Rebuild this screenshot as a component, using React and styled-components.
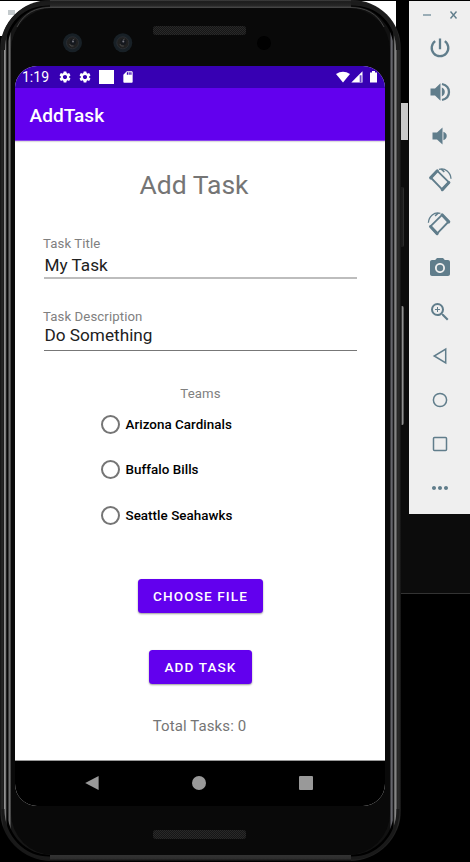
import React from "react";
import styled, { createGlobalStyle, css } from "styled-components";
import { MdPhotoCamera, MdZoomIn, MdMoreHoriz, MdSettings, MdSdCard } from "react-icons/md";

const GlobalStyle = createGlobalStyle`
  * { box-sizing: border-box; }
  html, body { margin: 0; background: #000; }
  body { font-family: Roboto, sans-serif; overflow: hidden; }
  svg { display: block; flex: none; }
`;

const Desktop = styled.main`
  position: relative;
  display: flex;
  align-items: flex-start;
  justify-content: space-between;
  width: 470px;
  height: 862px;
  overflow: hidden;
  background: #000;
`;

const Window = styled.div`
  position: absolute;
  left: ${(p) => p.$x}px;
  top: ${(p) => p.$y}px;
  width: ${(p) => p.$w}px;
  height: ${(p) => p.$h}px;
  background: ${(p) => p.$color};
  border-bottom: ${(p) => (p.$edge ? `1px solid ${p.$edge}` : "0")};
`;

const SideKey = styled.div`
  position: absolute;
  left: 400px;
  top: ${(p) => p.$y}px;
  width: 4px;
  height: ${(p) => p.$h}px;
  border-radius: 0 2px 2px 0;
  background: ${(p) => p.$bright
    ? "linear-gradient(90deg, #151515 15%, #303030 35%, #999 65%, #333)"
    : "linear-gradient(90deg, #292929, #151515 50%, #333)"};
`;

const Phone = styled.div`
  position: relative;
  width: 401px;
  height: 861px;
  padding: 3px 4px 2px;
  border-radius: 50px 49px 51px 51px;
  background: linear-gradient(90deg, #111 0, #292929 2px, #181818 4px, #202020 396px, #2c2c2c 399px, #111 401px);
`;

const Rim = styled.div`
  height: 100%;
  padding: 3px 3px 4px;
  border-radius: 47px;
  background: linear-gradient(90deg, #777 0, #aaa 1px, #444 2px, #000 3px, #000 389px, #333 390px, #999 391px, #444 393px);
`;

const InnerRim = styled.div`
  height: 100%;
  padding: 2px 4px 0;
  border-radius: 44px;
  background: linear-gradient(90deg, #000 0, #111 1px, #666 2px, #777 3px, #161616 4px, #111 383px, #63636b 384px, #66666c 385px, #000 387px);
`;

const Face = styled.div`
  height: 100%;
  display: flex;
  flex-direction: column;
  padding: 58px 4px 0;
  border-radius: 42px;
  background: #090909;
`;

const Metal = styled.svg`
  position: absolute;
  inset: 0;
  pointer-events: none;
`;

const Screen = styled.div`
  width: 370px;
  height: 740px;
  display: flex;
  flex-direction: column;
  border-radius: 22px;
  overflow: hidden;
  background: #fff;
`;

const StatusBar = styled.header`
  flex: none;
  height: 22px;
  display: flex;
  align-items: center;
  padding: 0 7px 0 7px;
  color: #fff;
  background: #3700b3;
`;

const Clock = styled.time`
  width: 35.6px;
  font-size: 14px;
  line-height: 23px;
`;

const Notices = styled.div`
  display: flex;
  align-items: center;
  gap: 6.8px;
  flex: 1;
`;

const Notice = styled.span`
  width: 15px;
  height: 14px;
  background: #fff;
`;

const Signals = styled.svg`
  width: 42px;
  height: 14px;
`;

const AppBar = styled.div`
  flex: none;
  height: 53px;
  padding: 1px 14.5px 0;
  color: #fff;
  background: #6200ee;
  border-bottom: 1px solid #8b43f1;
  box-shadow: 0 1px 1px #ddd;
  font-size: 19.1px;
  font-weight: 500;
  line-height: 54px;
`;

const Form = styled.form`
  flex: 1;
  display: flex;
  flex-direction: column;
  align-items: center;
  padding-top: 28px;
  border-bottom: 1px solid #999;
`;

const Title = styled.h1`
  margin: 0 0 32px;
  padding-right: 12px;
  color: #757575;
  font-size: 26.5px;
  font-weight: 400;
  line-height: 32px;
`;

const Field = styled.label`
  width: 313px;
  height: ${(p) => p.$height}px;
  margin-bottom: ${(p) => p.$after}px;
  display: flex;
  flex-direction: column;
  border-bottom: ${(p) => p.$weight}px solid ${(p) => p.$line};
`;

const Caption = styled.span`
  color: #808080;
  font-size: 13.2px;
  letter-spacing: .1px;
  line-height: 21px;
  margin-left: ${(p) => (p.$center ? 1 : -0.5)}px;
`;

const Value = styled.span`
  padding-left: 1px;
  color: #212121;
  font-size: 17.2px;
  line-height: ${(p) => p.$leading}px;
`;

const Teams = styled.div`
  width: 198px;
  display: flex;
  flex-direction: column;
  margin: 10.3px 0 28px;
`;

const Team = styled.label`
  display: flex;
  align-items: center;
  gap: 5.5px;
  height: 20px;
  margin-bottom: 25.5px;
  color: #000;
  font-size: 13.4px;
  font-weight: 500;
  letter-spacing: .04px;
`;

const Radio = styled.span`
  width: 19px;
  height: 19px;
  border: 2px solid #757575;
  border-radius: 50%;
`;

const Button = styled.button`
  width: ${(p) => p.$width}px;
  height: 34px;
  margin: 0 0 ${(p) => p.$after}px;
  padding: 1px 0 0 1px;
  border: 0;
  border-radius: 3.5px;
  color: #fff;
  background: #6200ee;
  box-shadow: 0 1px 2px #0006;
  font: 500 13.6px Roboto, sans-serif;
  letter-spacing: 1.1px;
  white-space: nowrap;
`;

const Total = styled.p`
  margin: 0 0 0 -1px;
  color: #757575;
  font-size: 15px;
  letter-spacing: .1px;
  line-height: 18px;
`;

const NavBar = styled.nav`
  flex: none;
  height: 45px;
  display: grid;
  grid-template-columns: repeat(3, 107px);
  padding: 0 0 2px 23.5px;
  align-items: center;
  justify-items: center;
  background: #000;
`;

const Toolbar = styled.aside`
  position: relative;
  width: 61px;
  height: 513px;
  margin-top: 1px;
  display: flex;
  flex-direction: column;
  align-items: center;
  color: #607d8b;
  background: #efefef;
`;

const WindowKeys = styled.div`
  width: 100%;
  height: 25px;
  display: flex;
  gap: 18px;
  padding: 9px 0 0 14px;
`;

const Tool = styled.button`
  width: 44px;
  height: 44px;
  display: grid;
  place-items: center;
  margin: 0;
  padding: 0 0 0 1px;
  border: 0;
  color: inherit;
  background: none;
`;

const lineArt = css`
  fill: none;
  stroke: currentColor;
  stroke-width: ${(p) => p.$weight || 2};
`;

const Art = styled.svg`
  width: 24px;
  height: 24px;
  overflow: visible;
  ${lineArt}
`;

const Rotate = ({ flip }) => (
  <Art viewBox="0 0 24 24">
    <g transform={flip ? "matrix(-1 0 0 1 23.4 0)" : undefined}>
      <path d="M9.3 2.8 2.7 9.5 14.6 21.8 21 14.4Z" strokeWidth="1.8" strokeLinejoin="round" />
      <path d="m2.6 9.9 6.7-7.1M14.2 21.6l6.7-7.1" strokeWidth="3" strokeLinecap="round" />
      <path d="M11 1.3C17.2-.5 22.6 4.3 23 10.7" strokeWidth="1.3" />
      <path d="m12 1 3.8 3.5 1-1-2.2-2.4Z" fill="currentColor" stroke="none" />
    </g>
  </Art>
);

const tools = [
  ["Power", <Art viewBox="0 0 24 24" $weight={2.3}><path d="M12 2.5v10.7M7.2 5.1a8.3 8.3 0 1 0 9.6 0" /></Art>],
  ["Volume up", <Art viewBox="0 0 24 24"><path d="M2.5 8.5h4.5l5.5-5.2v17.4L7 15.5H2.5Z" fill="currentColor" stroke="none" /><path d="M13.8 7.6v8.8c4-1.4 4-7.4 0-8.8Z" fill="currentColor" stroke="none" /><path d="M14 4c9.3 2.3 9.3 13.7 0 16" strokeWidth="2.3" /></Art>],
  ["Volume down", <Art viewBox="0 0 24 24"><path d="M4.5 8.5H9l5.5-5v17L9 15.5H4.5ZM15.4 7.8v8.4c4.5-1.2 4.5-7.2 0-8.4Z" fill="currentColor" stroke="none" /></Art>],
  ["Rotate left", <Rotate />],
  ["Rotate right", <Rotate flip />],
  ["Camera", <MdPhotoCamera size={24} />],
  ["Zoom", <MdZoomIn size={24} />],
  ["Back", <Art viewBox="0 0 24 24" $weight={1.5}><path d="M17.7 5v14L6.2 12Z" /></Art>],
  ["Home", <Art viewBox="0 0 24 24" $weight={1.5}><circle cx="12" cy="12" r="6.6" /></Art>],
  ["Overview", <Art viewBox="0 0 24 24" $weight={1.5}><rect x="5.5" y="5.5" width="13" height="13" rx="1" /></Art>],
  ["More", <MdMoreHoriz size={24} />],
];

function Hardware() {
  return (
    <Metal width="401" height="861" viewBox="0 0 401 861" fill="none">
      <defs>
        <pattern id="mesh" width="2" height="2" patternUnits="userSpaceOnUse">
          <rect width="2" height="2" fill="#161616" />
          <path d="M0 0h1v1H0zM1 1h1v1H1z" fill="#292929" />
        </pattern>
        <linearGradient id="topEdge" x1="0" y1="0" x2="0" y2="1">
          <stop stopColor="#444" /><stop offset=".2" stopColor="#1c1c1c" /><stop offset=".7" stopColor="#262626" /><stop offset="1" stopColor="#4c4c4c" />
        </linearGradient>
        <linearGradient id="bottomEdge" x1="0" y1="0" x2="0" y2="1">
          <stop stopColor="#333" /><stop offset=".6" stopColor="#2d2d2d" /><stop offset="1" stopColor="#0c0c0c" />
        </linearGradient>
      </defs>
      <path d="M3 50C3 22 22 3.5 50 3.5" stroke="#1b1b1b" strokeWidth="4" />
      <path d="M398 50C398 22 379 3.5 351 3.5" stroke="#1b1b1b" strokeWidth="4" />
      <path d="M3 809C3 837 23 858 50 858" stroke="#191919" strokeWidth="3" />
      <path d="M398 809C398 837 378 858 351 858" stroke="#191919" strokeWidth="3" />
      <path d="M50 0H351V8H50Z" fill="url(#topEdge)" />
      <path d="M50 855H351V861H50Z" fill="url(#bottomEdge)" />
      <path d="M17 27C24 13 36 7.5 50 7.5M384 27C377 13 365 7.5 351 7.5" stroke="#444" />
      <rect x="153" y="26" width="93" height="9" rx="3" fill="url(#mesh)" />
      <rect x="153" y="830" width="93" height="9" rx="3" fill="url(#mesh)" />
      {[72.5, 122.8].map((x) => (
        <g key={x}>
          <circle cx={x} cy="42.8" r="9.5" fill="#182026" />
          <circle cx={x} cy="42.8" r="6" fill="#202020" stroke="#2a2d32" />
          <circle cx={x + 0.5} cy="42" r="3" fill="#15181e" />
          <path d={`M${x - 3} 44q1 3 4 2M${x} 40l2-1`} stroke="#4b4b4b" />
          <circle cx={x + 0.5} cy="41.5" r="1" fill="#777780" />
        </g>
      ))}
      <circle cx="264" cy="43" r="7" fill="#010101" />
    </Metal>
  );
}

export default function App() {
  return (
    <>
      <GlobalStyle />
      <Desktop>
        <Window $x={0} $y={1} $w={396} $h={35} $color="#fff" />
        <Window $x={8} $y={10} $w={7} $h={5} $color="#c4cacd" />
        <Window $x={400} $y={103} $w={8} $h={37} $color="#c8c8c8" />
        <Window $x={400} $y={140} $w={70} $h={454} $color="#0c0c0c" $edge="#333" />
        <SideKey $y={187} $h={60} />
        <SideKey $y={306} $h={119} $bright />
        <Phone>
          <Rim>
            <InnerRim>
              <Face>
                <Screen>
                  <StatusBar>
                    <Clock>1:19</Clock>
                    <Notices>
                      <MdSettings size={14} />
                      <MdSettings size={14} />
                      <Notice />
                      <MdSdCard size={14} />
                    </Notices>
                    <Signals viewBox="0 0 42 14" fill="#fff">
                      <path d="M0 4Q7-.7 14 4L7 12.6Z" />
                      <path d="M15.3 12.5 26.5 1.3v11.2Z" />
                      <path d="M23.7 5.2h1.8v7h-1.8Z" fill="#6b43cb" />
                      <path d="M36 1h3v1.5h2v10h-7v-10h2Z" />
                    </Signals>
                  </StatusBar>
                  <AppBar>AddTask</AppBar>
                  <Form onSubmit={(e) => e.preventDefault()}>
                    <Title>Add Task</Title>
                    <Field $height={46} $after={27} $line="#bdbdbd" $weight={2}>
                      <Caption>Task Title</Caption>
                      <Value $leading={22}>My Task</Value>
                    </Field>
                    <Field $height={45} $after={32} $line="#777" $weight={1}>
                      <Caption>Task Description</Caption>
                      <Value $leading={17}>Do Something</Value>
                    </Field>
                    <Caption $center>Teams</Caption>
                    <Teams>
                      {["Arizona Cardinals", "Buffalo Bills", "Seattle Seahawks"].map((name) => (
                        <Team key={name}><Radio />{name}</Team>
                      ))}
                    </Teams>
                    <Button $width={125} $after={37}>CHOOSE FILE</Button>
                    <Button $width={103} $after={33}>ADD TASK</Button>
                    <Total>Total Tasks: 0</Total>
                  </Form>
                  <NavBar>
                    <svg width="14" height="16" fill="#999"><path d="M13.6 1v14L.2 8Z" /></svg>
                    <svg width="14" height="14" fill="#999"><circle cx="7" cy="7" r="7" /></svg>
                    <svg width="14" height="14" fill="#999"><rect width="14" height="14" rx="1" /></svg>
                  </NavBar>
                </Screen>
              </Face>
            </InnerRim>
          </Rim>
          <Hardware />
        </Phone>
        <Toolbar>
          <WindowKeys>
            <svg width="8" height="10" fill="none" stroke="#9aadb6" strokeWidth="2"><path d="M0 5h8" /></svg>
            <svg width="9" height="10" fill="none" stroke="#607d8b" strokeWidth="1.4"><path d="m1.5 1.5 6 7M7.5 1.5 1.5 8.5" /></svg>
          </WindowKeys>
          {tools.map(([label, icon]) => <Tool key={label} aria-label={label}>{icon}</Tool>)}
        </Toolbar>
      </Desktop>
    </>
  );
}
